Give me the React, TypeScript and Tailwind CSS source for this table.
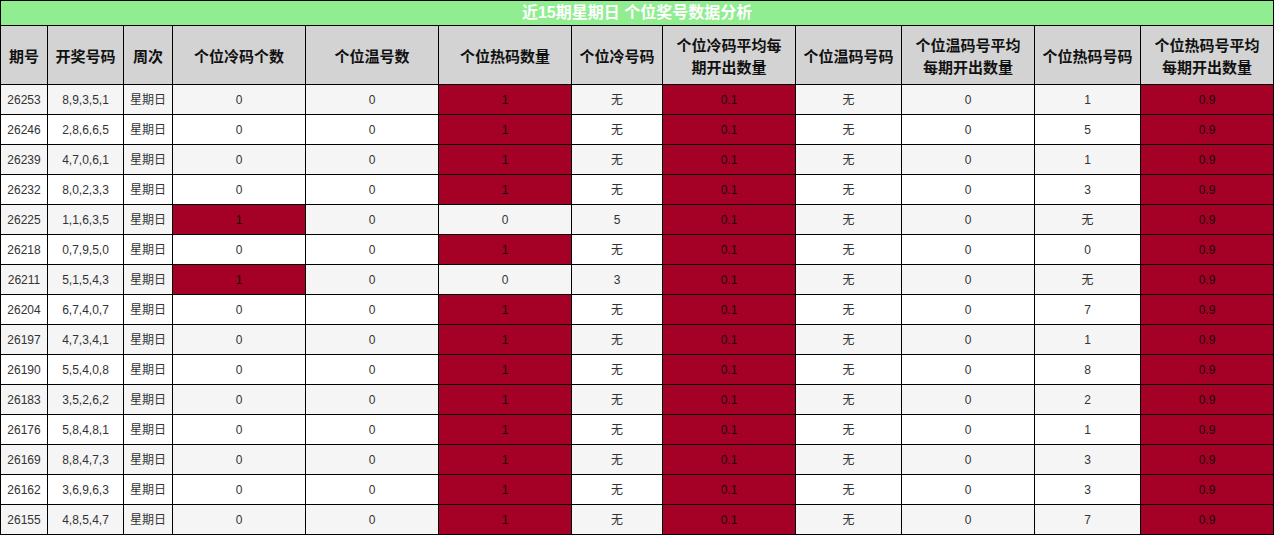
const widths = [47, 76, 49, 133, 133, 133, 91, 133, 106, 133, 106, 133];

const headers = [
  "期号",
  "开奖号码",
  "周次",
  "个位冷码个数",
  "个位温号数",
  "个位热码数量",
  "个位冷号码",
  "个位冷码平均每期开出数量",
  "个位温码号码",
  "个位温码号平均每期开出数量",
  "个位热码号码",
  "个位热码号平均每期开出数量",
];

type Row = { id: string; nums: string; cold: string; hot: string; coldNum: string; hotNum: string };

const rows: Row[] = [
  { id: "26253", nums: "8,9,3,5,1", cold: "0", hot: "1", coldNum: "无", hotNum: "1" },
  { id: "26246", nums: "2,8,6,6,5", cold: "0", hot: "1", coldNum: "无", hotNum: "5" },
  { id: "26239", nums: "4,7,0,6,1", cold: "0", hot: "1", coldNum: "无", hotNum: "1" },
  { id: "26232", nums: "8,0,2,3,3", cold: "0", hot: "1", coldNum: "无", hotNum: "3" },
  { id: "26225", nums: "1,1,6,3,5", cold: "1", hot: "0", coldNum: "5", hotNum: "无" },
  { id: "26218", nums: "0,7,9,5,0", cold: "0", hot: "1", coldNum: "无", hotNum: "0" },
  { id: "26211", nums: "5,1,5,4,3", cold: "1", hot: "0", coldNum: "3", hotNum: "无" },
  { id: "26204", nums: "6,7,4,0,7", cold: "0", hot: "1", coldNum: "无", hotNum: "7" },
  { id: "26197", nums: "4,7,3,4,1", cold: "0", hot: "1", coldNum: "无", hotNum: "1" },
  { id: "26190", nums: "5,5,4,0,8", cold: "0", hot: "1", coldNum: "无", hotNum: "8" },
  { id: "26183", nums: "3,5,2,6,2", cold: "0", hot: "1", coldNum: "无", hotNum: "2" },
  { id: "26176", nums: "5,8,4,8,1", cold: "0", hot: "1", coldNum: "无", hotNum: "1" },
  { id: "26169", nums: "8,8,4,7,3", cold: "0", hot: "1", coldNum: "无", hotNum: "3" },
  { id: "26162", nums: "3,6,9,6,3", cold: "0", hot: "1", coldNum: "无", hotNum: "3" },
  { id: "26155", nums: "4,8,5,4,7", cold: "0", hot: "1", coldNum: "无", hotNum: "7" },
];

const red = "bg-[#a50026] text-[#1a0a0a]";

export default function App() {
  return (
    <div className="w-[1274px] font-['Liberation_Sans','Noto_Sans_CJK_SC',sans-serif] text-[12px] text-[#333]">
      <table className="w-[1274px] table-fixed border-collapse border border-black">
        <colgroup>
          {widths.map((w, i) => (
            <col key={i} style={{ width: w }} />
          ))}
        </colgroup>
        <thead>
          <tr>
            <th
              colSpan={12}
              className="h-[25px] border border-black bg-[#90ee90] p-0 text-center text-[16px] font-bold leading-[20px] text-white"
            >
              近15期星期日 个位奖号数据分析
            </th>
          </tr>
          <tr>
            {headers.map((h, i) => (
              <th
                key={i}
                className="h-[59px] border border-black bg-[#d3d3d3] px-[7px] pt-[4px] pb-0 text-center text-[15px] font-bold leading-[22px] text-[#111]"
              >
                {h}
              </th>
            ))}
          </tr>
        </thead>
        <tbody>
          {rows.map((r, i) => {
            const bg = i % 2 === 0 ? "bg-[#f5f5f5]" : "bg-white";
            const cell = "h-[30px] border border-black p-0 text-center";
            return (
              <tr key={r.id} className={bg}>
                <td className={cell}>{r.id}</td>
                <td className={cell}>{r.nums}</td>
                <td className={cell}>星期日</td>
                <td className={`${cell} ${r.cold === "1" ? red : ""}`}>{r.cold}</td>
                <td className={cell}>0</td>
                <td className={`${cell} ${r.hot === "1" ? red : ""}`}>{r.hot}</td>
                <td className={cell}>{r.coldNum}</td>
                <td className={`${cell} ${red}`}>0.1</td>
                <td className={cell}>无</td>
                <td className={cell}>0</td>
                <td className={cell}>{r.hotNum}</td>
                <td className={`${cell} ${red}`}>0.9</td>
              </tr>
            );
          })}
        </tbody>
      </table>
    </div>
  );
}
